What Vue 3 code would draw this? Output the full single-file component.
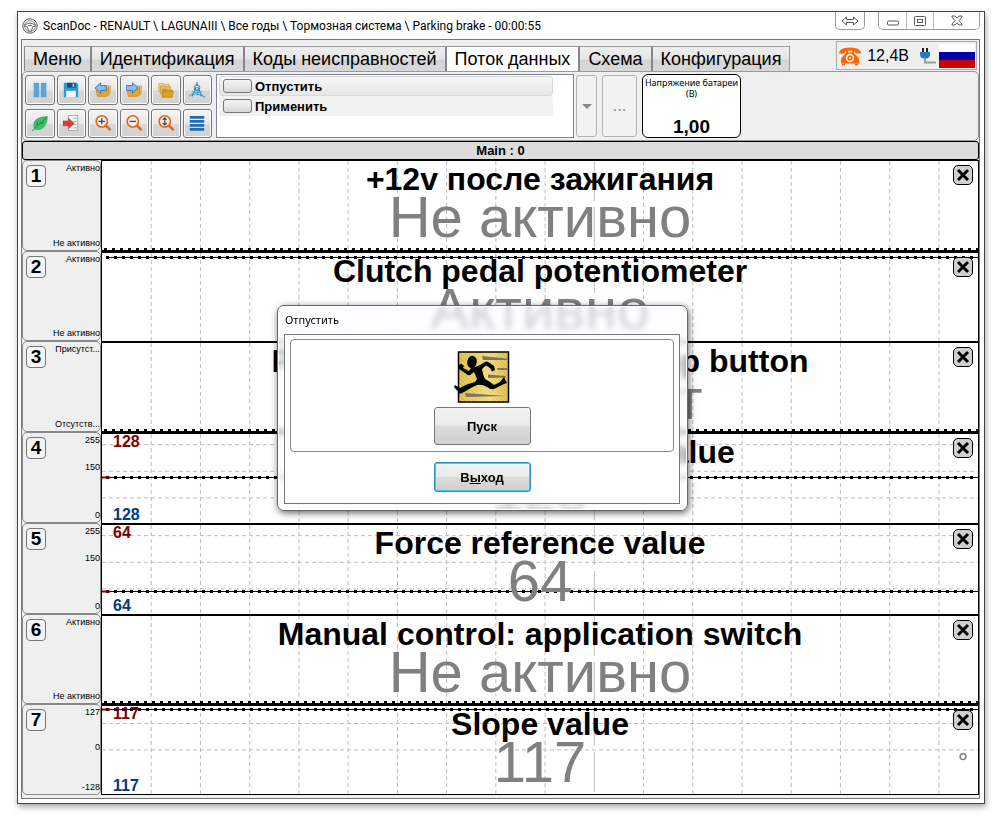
<script setup>
import { ref } from 'vue'

const tabs = ['Меню', 'Идентификация', 'Коды неисправностей', 'Поток данных', 'Схема', 'Конфигурация']
const activeTab = ref('Поток данных')

const tools = [
  { id: 'pause', label: 'Пауза' },
  { id: 'save', label: 'Сохранить' },
  { id: 'prev', label: 'Назад' },
  { id: 'next', label: 'Вперёд' },
  { id: 'folders', label: 'Записи' },
  { id: 'compass', label: 'Замеры' },
  { id: 'leaf', label: 'Эко' },
  { id: 'exit', label: 'Экспорт' },
  { id: 'zoomin', label: 'Увеличить' },
  { id: 'zoomout', label: 'Уменьшить' },
  { id: 'zoomfit', label: 'По высоте' },
  { id: 'list', label: 'Список' },
]

const commands = ['Отпустить', 'Применить']

const rows = [
  { n: 1, title: '+12v после зажигания', value: 'Не активно', marks: ['Активно', 'Не активно'], gaps: [1], line: 'bottom' },
  { n: 2, title: 'Clutch pedal potentiometer', value: 'Активно', marks: ['Активно', 'Не активно'], gaps: [1], line: '5%' },
  { n: 3, title: 'Parking brake engaged stop button', value: 'Отсутствует', marks: ['Присутст...', 'Отсутств...'], gaps: [1], line: 'bottom' },
  { n: 4, title: 'Clamping reference value', value: '128', marks: ['255', '150', '0'], gaps: [16, 36], line: '49%', grid: ['12%', '42%', '72%'], num: 128 },
  { n: 5, title: 'Force reference value', value: '64', marks: ['255', '150', '0'], gaps: [16, 36], line: '75%', grid: ['12%', '42%', '72%'], num: 64 },
  { n: 6, title: 'Manual control: application switch', value: 'Не активно', marks: ['Активно', 'Не активно'], gaps: [1], line: 'bottom' },
  { n: 7, title: 'Slope value', value: '117', marks: ['127', '0', '-128'], gaps: [24, 29], line: '4%', grid: ['20%', '50%'], num: 117, unit: '°' },
]

const columns = Array.from({ length: 17 }, (_, i) => i + 1)
const columnX = (k) => `${(k * 5.62).toFixed(2)}%`
</script>

<template>
  <div class="window">
    <header class="titlebar">
      <svg class="logo" viewBox="0 0 16 16" aria-hidden="true">
        <circle cx="8" cy="8" r="7.2" fill="#fff" stroke="#555" stroke-width="1" />
        <circle cx="8" cy="8" r="5.4" fill="none" stroke="#777" stroke-width=".8" />
        <path d="M2.800 6.500 Q8 3.600 13.200 6.500 L13 8.300 L10.500 8.800 L9.500 13 H6.500 L5.500 8.800 L3 8.300 Z" fill="#fff" stroke="#555" stroke-width=".9" />
        <path d="M6 7.500 H10" stroke="#555" stroke-width=".9" />
      </svg>
      <h1>ScanDoc - RENAULT \ LAGUNAIII \ Все годы \ Тормозная система \ Parking brake - 00:00:55</h1>
      <div class="winbtns">
        <button class="swap" aria-label="Переключить">
          <svg width="18" height="10" viewBox="0 0 18 10"><path d="M1 5 L5.5 1 V3.5 H12.5 V1 L17 5 L12.5 9 V6.5 H5.5 V9 Z" fill="#fff" stroke="#555" /></svg>
        </button>
        <div class="group">
          <button class="min-btn" aria-label="Свернуть">
            <svg width="12" height="6" viewBox="0 0 12 6"><rect x=".5" y="1" width="11" height="4" rx="1" fill="#fff" stroke="#555a66" /></svg>
          </button>
          <button aria-label="Развернуть">
            <svg width="12" height="10" viewBox="0 0 12 10"><rect x=".5" y=".5" width="11" height="9" rx="1" fill="#fff" stroke="#555a66" /><rect x="3.5" y="3.5" width="5" height="3" fill="#fff" stroke="#555a66" /></svg>
          </button>
          <button class="wide" aria-label="Закрыть">
            <svg width="12" height="11" viewBox="0 0 12 11"><path d="M1 1 H4 L6 3.2 L8 1 H11 V2 L8 5.5 L11 9 V10 H8 L6 7.8 L4 10 H1 V9 L4 5.5 L1 2 Z" fill="#fff" stroke="#555a66" /></svg>
          </button>
        </div>
      </div>
    </header>

    <main class="frame">
      <div class="topline">
        <nav class="tabs">
          <button v-for="t in tabs" :key="t" :class="{ active: t === activeTab }" @click="activeTab = t">{{ t }}</button>
        </nav>
        <div class="status">
          <svg width="24" height="20" viewBox="0 0 24 20" aria-hidden="true">
            <path d="M1 7.500 Q1 1.500 12 1.500 Q23 1.500 23 7.500 L17.500 7.500 Q18 4.500 12 4.500 Q6 4.500 6.500 7.500 Z" fill="#f60" />
            <path d="M9 4 V8 M15 4 V8" stroke="#f60" stroke-width="2" />
            <path d="M8.500 6.500 H15.500 L21 12.500 V17.500 H3 V12.500 Z" fill="#f60" />
            <circle cx="12" cy="12" r="3.400" fill="#f60" stroke="#fff" stroke-width="1.500" />
            <circle cx="12" cy="12" r="1" fill="#fff" />
            <path d="M4 18.500 H7 M17 18.500 H20" stroke="#f60" stroke-width="2" />
          </svg>
          <span>12,4В</span>
          <svg class="plug" width="17" height="18" viewBox="0 0 17 18" aria-hidden="true">
            <path d="M4 1 V6 M8 1 V6" stroke="#222" stroke-width="2" />
            <path d="M1 5 H11 V7 Q11 11 7.500 11.500 H4.500 Q1 11 1 7 Z" fill="#1e7fc4" />
            <path d="M6 11 V15.500 H17" fill="none" stroke="#999" stroke-width="2" />
          </svg>
          <svg class="flag" width="36" height="24" viewBox="0 0 36 24" aria-label="Русский"><rect width="36" height="8" fill="#fff" /><rect y="8" width="36" height="8" fill="#00a" /><rect y="16" width="36" height="8" fill="#c00" /></svg>
        </div>
      </div>

      <section class="toolbar">
        <div class="tools">
          <button v-for="tool in tools" :key="tool.id" :aria-label="tool.label">
            <svg width="16" height="16" viewBox="0 0 20 20">
              <g v-if="tool.id === 'pause'" fill="#5ba4d8"><rect x="2" y="1" width="7" height="18" /><rect x="11" y="1" width="7" height="18" /></g>
              <g v-else-if="tool.id === 'save'"><path d="M1 1 H17 L19 3 V19 H1 Z" fill="#2b9bd2" /><rect x="5" y="1" width="11" height="6" fill="#174e6f" /><rect x="12" y="2" width="2" height="4" fill="#cde" /><rect x="4" y="11" width="12" height="8" fill="#f4f8fb" /></g>
              <g v-else-if="tool.id === 'prev'"><path d="M9 7 L11 4 H20 V14 L17 18 H5 L4 12 Z" fill="#d3b064" opacity=".8" /><path d="M1 9 H16 L17 6 V14 L14 18 H3 Z" fill="#e5a62a" stroke="#b77c14" stroke-width=".6" /><path d="M0 7.500 L7 1 V4.500 H14 V10.500 H7 V14 Z" fill="#8bbcf4" stroke="#2462b0" /></g>
              <g v-else-if="tool.id === 'next'"><path d="M9 7 L11 4 H20 V14 L17 18 H5 L4 12 Z" fill="#d3b064" opacity=".8" /><path d="M1 9 H16 L17 6 V14 L14 18 H3 Z" fill="#e5a62a" stroke="#b77c14" stroke-width=".6" /><path d="M15 7.500 L8 1 V4.500 H0 V10.500 H8 V14 Z" fill="#8bbcf4" stroke="#2462b0" /></g>
              <g v-else-if="tool.id === 'folders'" stroke="#b98a2b" stroke-width=".6"><path d="M1 2 H7 L8 3 H14 V12 H1 Z" fill="#ecd08a" /><path d="M3 5 H9 L10 6 H16 V15 H3 Z" fill="#e5bd66" /><path d="M5 9 H11 L12 10 H18 V19 H5 Z" fill="#d09318" /><path d="M8 12 H20 L17 19 H5 Z" fill="#dfa02a" /></g>
              <g v-else-if="tool.id === 'compass'" fill="none"><path d="M10 0 V5 M9 6 L4 18 M11 6 L16 18" stroke="#2c79a8" stroke-width="1.400" /><circle cx="10" cy="7" r="3.500" stroke="#2c79a8" /><path d="M0 18 Q6 15 9 9 M11 9 Q14 16 20 19 M4 12 L15 17 M16 12 L5 16 M10 9 V17" stroke="#3ba0d0" stroke-width="1.300" /></g>
              <g v-else-if="tool.id === 'leaf'"><path d="M3 17 C-1 7 8 2 19 2 C20 12 13 20 5 18 Z" fill="#3fc066" stroke="#2a8f48" stroke-width=".6" /><path d="M0 20 Q9 12 19 2 M7 13 L6.500 8 M10 10 L15 10" fill="none" stroke="#1f6f38" /></g>
              <g v-else-if="tool.id === 'exit'"><rect x="6.500" y=".5" width="12" height="19" fill="#f2f4f6" stroke="#9aa3ab" /><path d="M13 4 H17 M13 8 H17 M13 12 H17 M13 16 H17" stroke="#8e979f" /><path d="M0 7.500 H7 V4 L14 10.500 L7 17 V13.500 H0 Z" fill="#e03a3a" stroke="#a52424" stroke-width=".6" /></g>
              <g v-else-if="tool.id.startsWith('zoom')" fill="none"><circle cx="8.500" cy="8" r="7" fill="#f5efe9" stroke="#e0641a" stroke-width="2" /><path d="M14 13.500 L18.500 18" stroke="#e0641a" stroke-width="3" stroke-linecap="round" />
                <path v-if="tool.id === 'zoomin'" d="M8.500 4 V12 M4.500 8 H12.500" stroke="#444" stroke-width="1.600" />
                <path v-else-if="tool.id === 'zoomout'" d="M4.500 8 H12.500" stroke="#444" stroke-width="1.600" />
                <path v-else d="M8.500 3.500 V12.500 M6 6 L8.500 3.500 L11 6 M6 10 L8.500 12.500 L11 10" stroke="#444" stroke-width="1.400" /></g>
              <path v-else d="M1 3 H19 M1 8 H19 M1 13 H19 M1 18 H19" stroke="#1f6cb0" stroke-width="3.400" />
            </svg>
          </button>
        </div>
        <ul class="commands">
          <li v-for="c in commands" :key="c"><button><i></i>{{ c }}</button></li>
        </ul>
        <button class="flat drop" aria-label="Открыть список">
          <svg width="10" height="5" viewBox="0 0 10 5"><path d="M0 0 H10 L5 5 Z" fill="#8a8a8a" /></svg>
        </button>
        <button class="flat more">...</button>
        <div class="sensor">
          <span>Напряжение батареи (В)</span>
          <strong>1,00</strong>
        </div>
      </section>

      <h2 class="grouphead">Main : 0</h2>

      <section class="rows">
        <article v-for="r in rows" :key="r.n" class="row">
          <div class="side">
            <b class="badge">{{ r.n }}</b>
            <div class="scale">
              <template v-for="(m, i) in r.marks" :key="i">
                <span>{{ m }}</span>
                <i v-if="i < r.gaps.length" :style="{ flexGrow: r.gaps[i] }"></i>
              </template>
            </div>
          </div>
          <div class="plot">
            <svg class="chart" aria-hidden="true">
              <line v-for="k in columns" :key="k" :x1="columnX(k)" :x2="columnX(k)" y1="0" y2="100%" :class="k === 10 ? 'cursor' : 'gridline'" />
              <line v-for="g in r.grid" :key="g" x1="0" x2="100%" :y1="g" :y2="g" class="gridline" />
              <template v-if="r.line !== 'bottom'">
                <line x1="4" x2="100%" :y1="r.line" :y2="r.line" class="trace" />
                <line x1="4" x2="100%" :y1="r.line" :y2="r.line" class="dots" />
                <line v-if="r.num" x1="0" x2="8" :y1="r.line" :y2="r.line" class="limit" />
              </template>
            </svg>
            <svg v-if="r.line === 'bottom'" class="base" aria-hidden="true">
              <line x1="2" x2="100%" y1="1" y2="1" class="dots" />
            </svg>
            <div v-if="r.num" class="range"><b class="max">{{ r.num }}</b><b class="min">{{ r.num }}</b></div>
            <div class="reading">
              <h3>{{ r.title }}</h3>
              <p>{{ r.value }}</p>
            </div>
            <div class="actions">
              <button :aria-label="`Удалить ${r.title}`">
                <svg width="14" height="14" viewBox="0 0 14 14"><path d="M2 2 L12 12 M12 2 L2 12" stroke="#000" stroke-width="3" /></svg>
              </button>
              <span v-if="r.unit">{{ r.unit }}</span>
            </div>
          </div>
        </article>
      </section>
    </main>

    <div class="dialog" role="dialog" aria-labelledby="dlg-title">
      <h2 id="dlg-title">Отпустить</h2>
      <div class="body">
        <div class="box">
          <svg class="runner" width="56" height="52" viewBox="0 0 56 52" aria-hidden="true">
            <defs>
              <pattern id="hatch" width="3" height="3" patternUnits="userSpaceOnUse" patternTransform="rotate(45)"><rect width="3" height="3" fill="#e4c858" /><rect width="3" height="1" fill="#cfae40" /></pattern>
              <linearGradient id="shine" x1="0" x2="1"><stop offset="0" stop-color="#fff1a0" stop-opacity="0" /><stop offset=".6" stop-color="#fff1a0" stop-opacity=".6" /><stop offset="1" stop-color="#fff1a0" stop-opacity="0" /></linearGradient>
            </defs>
            <rect x="4.500" y="1" width="50" height="50" fill="url(#hatch)" stroke="#000" stroke-width="1.500" />
            <rect x="5.500" y="2" width="48" height="48" fill="url(#shine)" />
            <g fill="#7b7562"><path d="M28 5 L53 7.500 L53 9 L29 9 Z" /><path d="M43 17 L53 17 V19 L44 19 Z" /><path d="M34 23.500 L52 25 L52 26.500 L34 27 Z" /><path d="M11 42 L51 45 L12 46 Z" /></g>
            <ellipse cx="18" cy="11" rx="4.800" ry="6.200" transform="rotate(10 18 11)" />
            <path d="M17 17 L21 16 L26 14 L31 11 Q33 10 35 11.500 L40 15 L41 19 L38 20.500 L36 17 L32 14.500 L28 18 L29 23 L31 28 Q35 30 40 34 L46 31 L50 26 L53 32 L50 33 L40 38 Q37 39 33 36 Q28 33 23 34 Q18 36 12 40 L6 43 L0 36 L1 34 L6 37 Q12 33 21 31 L23 28 L20 21 L16 24 Q14 25 11 22 L5 18 L4 15 L7 12.500 L10 15 L9 17 L15 20 Z" />
          </svg>
          <button class="cmd start">Пуск</button>
        </div>
        <button class="cmd leave">В<u>ы</u>ход</button>
      </div>
    </div>
  </div>
</template>

<style>
body {
  background: #fff;
}
</style>

<style scoped>
* {
  box-sizing: border-box;
}
h1, h2, h3, p, ul {
  margin: 0;
  padding: 0;
  font-weight: normal;
}
button {
  padding: 0;
  font-family: inherit;
  color: inherit;
  cursor: pointer;
}
svg {
  display: block;
  flex: none;
}
.window {
  position: relative;
  display: flex;
  flex-direction: column;
  min-height: calc(100vh - 30px);
  margin: 11px 15px 19px 17px;
  border: 1px solid #444;
  background: #fff;
  box-shadow: 1px 3px 6px rgba(0, 0, 0, 0.35);
  font-family: "Liberation Sans", Arial, sans-serif;
  color: #000;
}
.titlebar {
  display: flex;
  align-items: center;
  height: 27px;
  padding: 0 4px;
}
.logo {
  width: 16px;
  height: 16px;
  margin-right: 5px;
}
h1 {
  flex: 1;
  font: 12px/24px Roboto, "Noto Sans", sans-serif;
  white-space: nowrap;
}
.winbtns {
  display: flex;
  align-self: flex-start;
  gap: 13px;
}
.winbtns button {
  display: flex;
  align-items: center;
  justify-content: center;
  width: 27px;
  height: 18px;
  border: 0;
  background: #fff;
}
.winbtns .swap {
  width: 30px;
  border: 1px solid #999;
  border-top: 0;
  border-radius: 0 0 5px 5px;
}
.group {
  display: flex;
  overflow: hidden;
  border: 1px solid #999;
  border-top: 0;
  border-radius: 0 0 5px 5px;
}
.group button {
  height: 17px;
}
.group .min-btn {
  padding-top: 4px;
}
.group button + button {
  border-left: 1px solid #bbb;
}
.group .wide {
  width: 46px;
}
.frame {
  flex: 1;
  display: flex;
  flex-direction: column;
  margin: 0 4px 4px 3px;
  border: 1px solid #777;
  background: #efefef;
}
.topline {
  display: flex;
  justify-content: space-between;
  align-items: flex-end;
  height: 31px;
  padding: 0 2px;
}
.tabs {
  display: flex;
}
.tabs button {
  height: 25px;
  padding: 0 8px;
  border: 1px solid #9a9aa2;
  border-width: 1px 0 0 2px;
  border-left-color: #85858f;
  background: linear-gradient(#eee, #e6e6e6 50%, #d4d4d4 55%, #d8d8d8);
  font-size: 18px;
  line-height: 24px;
  white-space: nowrap;
}
.tabs button:first-child {
  border-left-width: 1px;
}
.tabs button:last-child {
  border-right-width: 1px;
}
.tabs .active {
  background: #fff;
}
.status {
  display: flex;
  align-items: center;
  align-self: flex-start;
  height: 29px;
  margin-top: 1px;
  padding: 0 1px;
  border: 1px solid #aaa;
  font-size: 16px;
}
.status span {
  margin: 0 10px 0 5px;
}
.flag {
  margin-left: 3px;
}
.toolbar {
  display: flex;
  align-items: stretch;
  height: 70px;
  padding: 2px;
  border: 1px solid #999;
  border-radius: 5px;
}
.tools {
  display: grid;
  grid-template-columns: repeat(6, 1fr);
  grid-template-rows: 1fr 1fr;
  gap: 4px 2px;
  width: 188px;
  padding: 1px 1px 0 0;
}
.tools button {
  display: flex;
  align-items: center;
  justify-content: center;
  border: 1px solid #777;
  border-radius: 3px;
  background: linear-gradient(#f4f4f4, #e8e8e8 50%, #d6d6d6 55%, #d2d2d2);
  box-shadow: inset 0 0 0 1px #fafafa;
}
.commands {
  width: 358px;
  margin-left: 3px;
  padding: 1px 2px;
  border: 1px solid #7f8490;
  background: #fff;
  list-style: none;
}
.commands button {
  display: flex;
  align-items: center;
  gap: 3px;
  width: 334px;
  height: 20px;
  padding: 0 3px;
  border: 1px solid transparent;
  border-radius: 3px;
  background: #f0f0f0;
  font-size: 13px;
  font-weight: bold;
}
.commands li:first-child button {
  border-color: #d8d8d8;
  background: linear-gradient(#f8f8f8, #e6e6e6);
}
.commands i {
  width: 29px;
  height: 14px;
  border: 1px solid #777;
  border-radius: 3px;
  background: linear-gradient(#f2f2f2, #e9e9e9 50%, #d5d5d5);
}
.flat {
  display: flex;
  align-items: center;
  justify-content: center;
  margin: 1px 0;
  border: 1px solid #b0b2b5;
  border-radius: 3px;
  background: #f2f2f2;
  color: #888;
  font-size: 17px;
}
.drop {
  width: 21px;
  margin-left: 2px;
}
.more {
  width: 35px;
  margin-left: 5px;
}
.sensor {
  display: flex;
  flex-direction: column;
  align-items: center;
  justify-content: space-between;
  width: 99px;
  margin-left: 5px;
  padding-top: 2px;
  border: 1px solid #000;
  border-radius: 6px;
  background: #fff;
  text-align: center;
}
.sensor span {
  font: 9px/11px "Noto Sans", sans-serif;
}
.sensor strong {
  font-size: 19px;
  line-height: 20px;
}
.grouphead {
  height: 19px;
  border: 1px solid #000;
  border-radius: 3px;
  background: #dcdcdc;
  font-size: 13px;
  font-weight: bold;
  line-height: 17px;
  text-align: center;
}
.rows {
  flex: 1;
  display: grid;
  grid-auto-rows: minmax(84px, 1fr);
  margin-bottom: 3px;
}
.row {
  display: flex;
}
.side {
  display: flex;
  justify-content: space-between;
  width: 79px;
  border: 1px solid #888;
  border-radius: 5px;
  padding: 2px 0 1px 3px;
}
.badge {
  width: 20px;
  height: 22px;
  margin-top: 2px;
  border: 1px solid #777;
  border-radius: 4px;
  background: #f4f4f4;
  font-size: 19px;
  line-height: 20px;
  text-align: center;
}
.scale {
  display: flex;
  flex-direction: column;
  align-items: flex-end;
  margin-left: -4px;
  font-size: 9px;
  line-height: 11px;
  white-space: nowrap;
}
.plot {
  position: relative;
  flex: 1;
  display: grid;
  border: 1px solid #000;
  border-width: 2px 1px 0;
  background: #fff;
}
.row:first-child .plot {
  border-top-width: 1px;
}
.row:last-child .plot {
  border-bottom-width: 1px;
}
.plot > * {
  grid-area: 1 / 1;
}
.chart {
  position: absolute;
  inset: 0;
  width: 100%;
  height: 100%;
}
.base {
  z-index: 1;
  align-self: end;
  width: 100%;
  height: 3px;
  border-bottom: 1px solid #000;
}
.reading,
.range,
.actions {
  z-index: 1;
}
.gridline {
  stroke: #bdbdbd;
  stroke-dasharray: 4 3;
}
.cursor {
  stroke: #bdbdbd;
  stroke-dasharray: 40 6;
}
.trace {
  stroke: #000;
  stroke-width: 1px;
}
.dots {
  stroke: #000;
  stroke-width: 3px;
  stroke-dasharray: 3 5;
}
.limit {
  stroke: #8b0000;
  stroke-width: 2px;
}
.range {
  display: flex;
  flex-direction: column;
  justify-content: space-between;
  padding-left: 11px;
  font-size: 16px;
  line-height: 16px;
}
.max {
  color: #800000;
}
.min {
  color: #003a80;
}
.reading {
  text-align: center;
  white-space: nowrap;
}
.reading h3 {
  font-size: 32px;
  font-weight: bold;
  line-height: 36px;
}
.reading p {
  color: #808080;
  font-size: 58px;
  line-height: 40px;
}
.actions {
  display: flex;
  flex-direction: column;
  justify-self: end;
  align-items: center;
  gap: 17px;
  padding: 4px 5px 0 0;
  color: #777;
  font-size: 26px;
  line-height: 30px;
}
.actions button {
  display: flex;
  align-items: center;
  justify-content: center;
  width: 20px;
  height: 20px;
  border: 1px solid #000;
  border-radius: 5px;
  background: #cfcfcf;
}
.dialog {
  position: absolute;
  z-index: 2;
  top: 293px;
  left: 259px;
  width: 411px;
  padding: 0 7px 6px 6px;
  border: 1px solid #666;
  border-radius: 7px;
  background: rgba(250, 253, 255, 0.65);
  backdrop-filter: blur(3px);
  box-shadow: 1px 2px 7px rgba(0, 0, 0, 0.6), inset 0 0 0 1px #fff;
}
.dialog h2 {
  padding-left: 1px;
  font: 11px/28px "Noto Sans", sans-serif;
}
.body {
  display: flex;
  flex-direction: column;
  align-items: center;
  gap: 10px;
  padding: 4px 5px 11px;
  border: 1px solid #777;
  background: #fff;
}
.box {
  display: flex;
  flex-direction: column;
  align-items: center;
  gap: 4px;
  width: 100%;
  padding: 11px 0 6px;
  border: 1px solid #888;
  border-radius: 4px;
}
.cmd {
  width: 97px;
  border: 1px solid #777;
  border-radius: 3px;
  background: linear-gradient(#f2f2f2, #ebebeb 48%, #dcdcdc 50%, #cfcfcf);
  font-size: 13px;
  font-weight: bold;
}
.start {
  height: 38px;
}
.leave {
  height: 30px;
  border-color: #2b8fc0;
  box-shadow: inset 0 0 0 1px #4cc3f0;
}
</style>
